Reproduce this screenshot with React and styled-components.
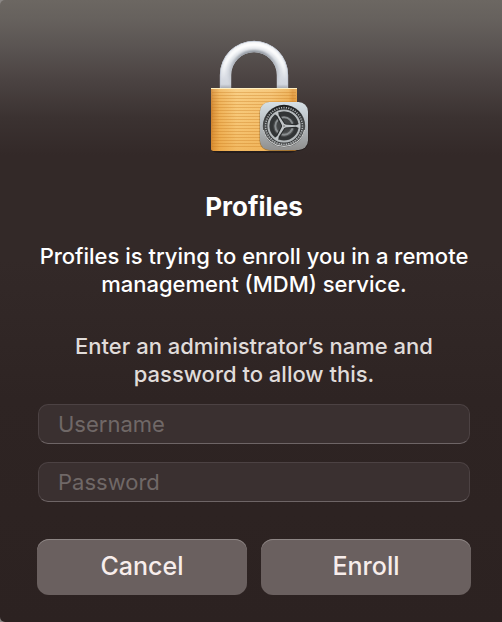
import React from "react";
import styled, { createGlobalStyle } from "styled-components";

const GlobalStyle = createGlobalStyle`
  * { box-sizing: border-box; }
  html { background: #8b8785; }
  body {
    margin: 0;
    font-family: Inter, "Liberation Sans", sans-serif;
  }
`;

const Dialog = styled.main`
  min-height: 100vh;
  display: flex;
  flex-direction: column;
  padding: 36px 31px 27px 37px;
  border-radius: 5px 0 0 5px;
  background: linear-gradient(
    to bottom,
    #6c6762 0,
    #66615d 20px,
    #5b5553 45px,
    #4b4342 80px,
    #3b3231 118px,
    #332928 155px,
    #332928 260px,
    #2e2423 400px,
    #2c2221 100%
  );
`;

const LockArt = styled.svg`
  display: block;
  width: 116px;
  height: 120px;
  margin: 0 auto;
`;

const Title = styled.h1`
  margin: 35px 0 19px;
  font-size: 26px;
  line-height: 32px;
  font-weight: 700;
  text-align: center;
  color: #ffffff;
`;

const Message = styled.p`
  margin: 0 0 ${(p) => (p.$muted ? 16 : 34)}px;
  padding: 0 ${(p) => (p.$muted ? 24 : 0)}px;
  font-size: 22px;
  line-height: 28px;
  font-weight: 500;
  text-align: center;
  color: ${(p) => (p.$muted ? "#e0dcda" : "#ffffff")};
`;

const Form = styled.form`
  display: flex;
  flex-direction: column;
  gap: 18px;
`;

const Fields = styled.div`
  display: flex;
  flex-direction: column;
  gap: 18px;
  padding: 0 1px;
`;

const Field = styled.input`
  width: 100%;
  height: 40px;
  padding: 0 19px;
  border: 1px solid #4c4243;
  border-bottom-color: #6e6566;
  border-radius: 10px;
  outline: none;
  background: #3a3030;
  color: #ffffff;
  font: 400 22px/28px Inter, "Liberation Sans", sans-serif;

  &::placeholder {
    color: #706867;
    opacity: 1;
  }
`;

const Actions = styled.div`
  display: grid;
  grid-template-columns: 1fr 1fr;
  gap: 14px;
  margin-top: 19px;
`;

const Button = styled.button`
  height: 56px;
  padding: 0 0 2px;
  border: 0;
  border-radius: 12px;
  background: #6a605f;
  box-shadow: inset 0 1px 0 #8d8584;
  color: #f7edeb;
  font: 500 25px/32px Inter, "Liberation Sans", sans-serif;
`;

const GROOVES = Array.from({ length: 19 }, (_, i) => 92 + i * 3);
const SPOKES = [0, 120, 240];
const TEETH = Array.from({ length: 48 }, (_, i) => i * 7.5);

function Lock() {
  return (
    <LockArt viewBox="196 36 116 120" aria-hidden="true">
      <defs>
        <linearGradient id="brass" x1="0" x2="1" y1="0" y2="0">
          <stop offset="0" stopColor="#c87d2d" />
          <stop offset="0.03" stopColor="#db943d" />
          <stop offset="0.1" stopColor="#efb259" />
          <stop offset="0.3" stopColor="#f8ca7c" />
          <stop offset="0.7" stopColor="#f5c170" />
          <stop offset="0.9" stopColor="#edae53" />
          <stop offset="0.95" stopColor="#dd9238" />
          <stop offset="1" stopColor="#e29d43" />
        </linearGradient>
        <linearGradient id="brassShade" x1="0" x2="0" y1="0" y2="1">
          <stop offset="0" stopColor="#fff2c8" stopOpacity="0.2" />
          <stop offset="0.4" stopColor="#eba842" stopOpacity="0.05" />
          <stop offset="1" stopColor="#e7992f" stopOpacity="0.35" />
        </linearGradient>
        <linearGradient id="steel" x1="0" x2="0" y1="41" y2="88" gradientUnits="userSpaceOnUse">
          <stop offset="0" stopColor="#eceef1" />
          <stop offset="0.5" stopColor="#dde1e7" />
          <stop offset="0.92" stopColor="#d3d7df" />
          <stop offset="1" stopColor="#a9adb4" />
        </linearGradient>
        <linearGradient id="steelShade" x1="0" x2="0" y1="47" y2="84" gradientUnits="userSpaceOnUse">
          <stop offset="0" stopColor="#80868f" />
          <stop offset="0.35" stopColor="#9aa0a9" stopOpacity="0.8" />
          <stop offset="1" stopColor="#b9bec6" stopOpacity="0.3" />
        </linearGradient>
        <linearGradient id="steelLight" x1="0" x2="0" y1="41" y2="80" gradientUnits="userSpaceOnUse">
          <stop offset="0" stopColor="#ffffff" />
          <stop offset="0.6" stopColor="#ffffff" stopOpacity="0.8" />
          <stop offset="1" stopColor="#ffffff" stopOpacity="0" />
        </linearGradient>
        <linearGradient id="badge" x1="0" x2="0" y1="0" y2="1">
          <stop offset="0" stopColor="#d6e0e6" />
          <stop offset="0.5" stopColor="#b4babe" />
          <stop offset="1" stopColor="#8f8f8e" />
        </linearGradient>
        <linearGradient id="well" x1="0" x2="0" y1="0" y2="1">
          <stop offset="0" stopColor="#1b1d1e" />
          <stop offset="0.4" stopColor="#444748" />
          <stop offset="1" stopColor="#606161" />
        </linearGradient>
        <linearGradient id="cog" x1="0" x2="0" y1="105" y2="147" gradientUnits="userSpaceOnUse">
          <stop offset="0" stopColor="#c7ced2" />
          <stop offset="1" stopColor="#a1a3a4" />
        </linearGradient>
        <filter id="soft" x="-10%" y="-10%" width="120%" height="120%">
          <feGaussianBlur stdDeviation="0.8" />
        </filter>
        <clipPath id="shackle">
          <path d="M219.800 88V75a34.200 34.200 0 0 1 68.400 0v13h-11.500V75a22.700 22.700 0 0 0-45.400 0v13z" />
        </clipPath>
      </defs>

      <g clipPath="url(#shackle)">
        <path d="M225.500 88V75a28.500 28.500 0 0 1 57 0v13" fill="none" stroke="url(#steel)" strokeWidth="12" />
        <path d="M231 90V75a23 23 0 0 1 46 0v15" fill="none" stroke="url(#steelShade)" strokeWidth="4" filter="url(#soft)" />
        <path d="M223.500 90V75a30.500 30.500 0 0 1 61 0v15" fill="none" stroke="url(#steelLight)" strokeWidth="4" filter="url(#soft)" />
        <path d="M220 90V75a34 34 0 0 1 68 0v15" fill="none" stroke="#bcc4d2" strokeWidth="1" />
      </g>

      <path d="M211 149h86v1q-2 3-10 3h-66q-8 0-10-3z" fill="#1b1414" opacity="0.6" />
      <path d="M211 88h86v61q0 2-4 2h-78q-4 0-4-2z" fill="url(#brass)" />
      <path d="M211 88h86v61q0 2-4 2h-78q-4 0-4-2z" fill="url(#brassShade)" />
      {GROOVES.map((y) => (
        <rect key={y} x="212" y={y} width="84" height="1" fill="#c97b20" opacity="0.35" />
      ))}
      <rect x="211" y="88" width="86" height="1" fill="#fff0c2" />

      <rect x="259.500" y="102" width="49" height="49" rx="10" fill="#000000" opacity="0.3" />
      <rect x="260" y="102" width="48" height="48" rx="9.500" fill="url(#badge)" />
      <circle cx="284" cy="126" r="21.200" fill="url(#well)" />
      <path d="M263.500 130a21 21 0 0 0 41 0" fill="none" stroke="#d0d2d2" strokeWidth="1" />
      {TEETH.map((a) => (
        <path key={a} d="M301 126h2.200" stroke="url(#cog)" strokeWidth="1.100" transform={`rotate(${a} 284 126)`} />
      ))}
      <circle cx="284" cy="126" r="17.200" fill="none" stroke="#2a2c2d" strokeWidth="0.800" />
      <circle cx="284" cy="126" r="15.600" fill="none" stroke="#b5babc" strokeWidth="2" />
      <circle cx="284" cy="126" r="12.500" fill="none" stroke="#323536" strokeWidth="3.500" />
      <circle cx="284" cy="126" r="8.700" fill="none" stroke="#8a8f91" strokeWidth="2" />
      <circle cx="284" cy="126" r="6.500" fill="#424546" />
      {SPOKES.map((a) => (
        <g key={a} transform={`rotate(${a} 284 126)`}>
          <path d="M285 126h14" stroke="#292c2d" strokeWidth="4.400" />
          <path d="M284 124.600L296 125.200L300 123.500V128.500L296 126.800L284 127.400Z" fill="#bfc4c6" />
        </g>
      ))}
      <circle cx="284" cy="126" r="2" fill="#c1c5c7" />
      <circle cx="284" cy="126" r="0.800" fill="#66696a" />
    </LockArt>
  );
}

export default function App() {
  return (
    <>
      <GlobalStyle />
      <Dialog role="dialog" aria-labelledby="dialog-title">
        <Lock />
        <Title id="dialog-title">Profiles</Title>
        <Message>Profiles is trying to enroll you in a remote management (MDM) service.</Message>
        <Message $muted>Enter an administrator’s name and password to allow this.</Message>
        <Form onSubmit={(e) => e.preventDefault()}>
          <Fields>
            <Field type="text" placeholder="Username" aria-label="Username" />
            <Field type="password" placeholder="Password" aria-label="Password" />
          </Fields>
          <Actions>
            <Button type="button">Cancel</Button>
            <Button type="submit">Enroll</Button>
          </Actions>
        </Form>
      </Dialog>
    </>
  );
}
